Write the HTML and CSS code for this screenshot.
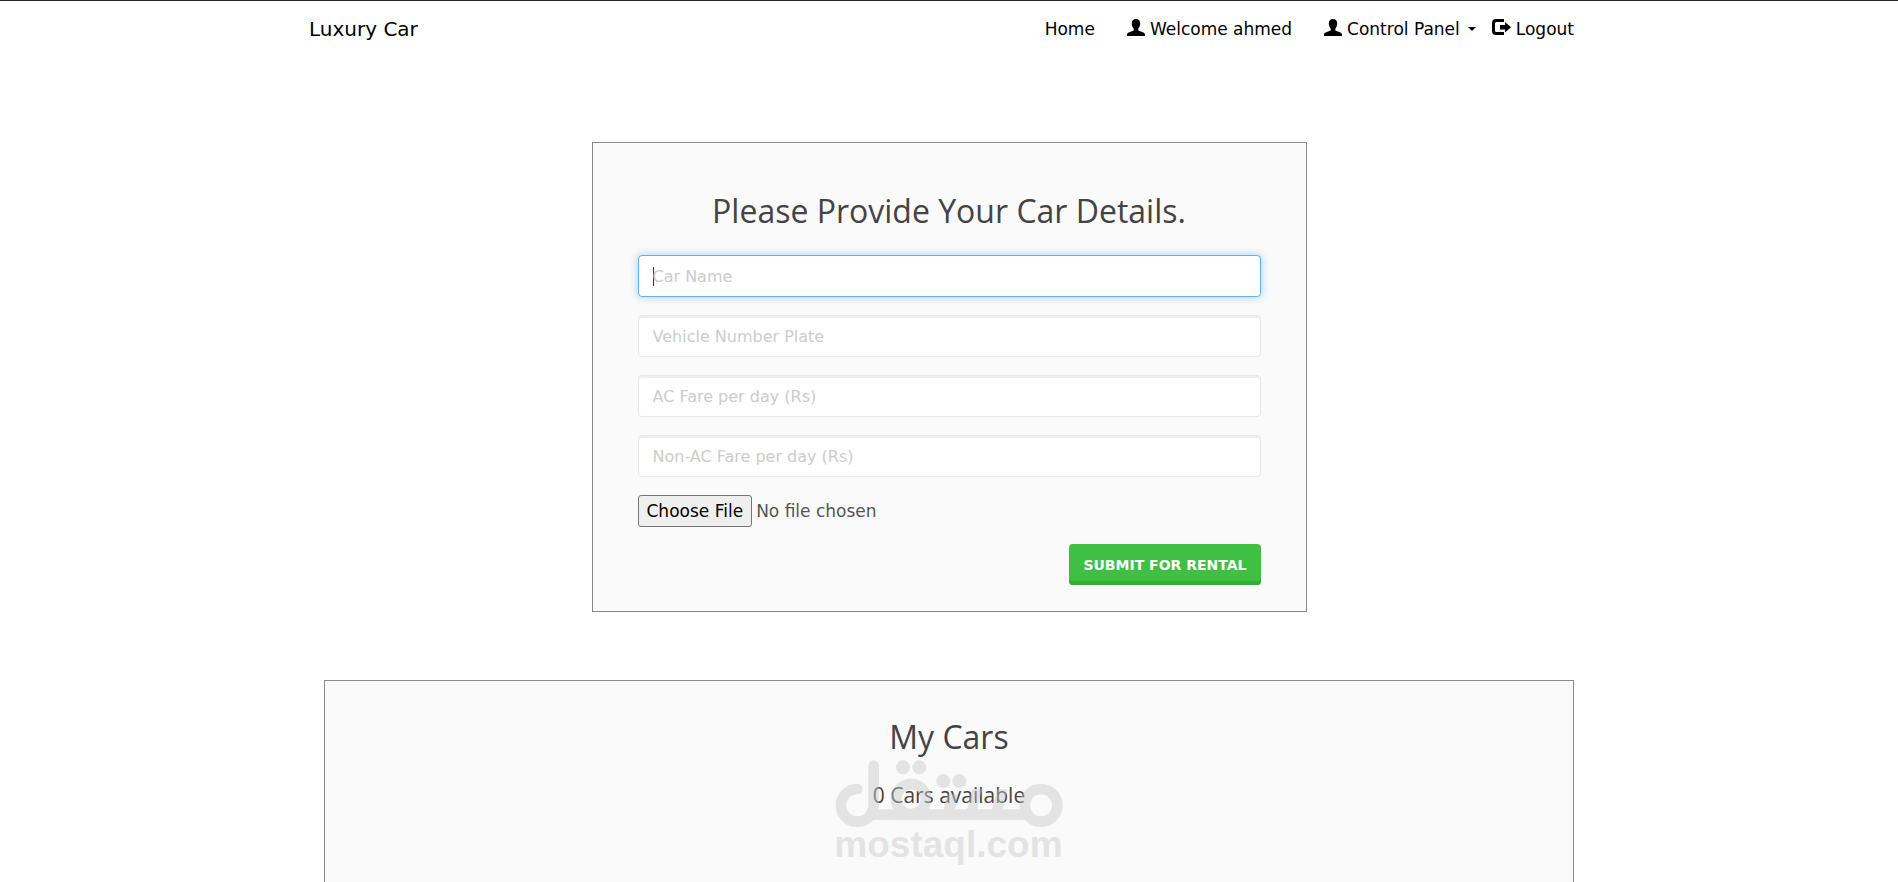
FILE: index.html
```html
<!DOCTYPE html>
<html lang="en">

<head>
    <meta charset="UTF-8">
    <meta name="viewport" content="width=device-width, initial-scale=1.0">
    <title>Luxury Car</title>
    <link rel="stylesheet" href="styles.css">
</head>

<body>
    <nav class="navbar">
        <div class="container navbar-inner">
            <a class="navbar-brand" href="#">Luxury Car</a>
            <ul class="navbar-nav">
                <li><a href="#">Home</a></li>
                <li>
                    <a href="#">
                        <svg class="icon" viewBox="0 0 18 17"><path d="M9 0C6.300 0 4.800 1.800 4.800 4.300C4.800 6.500 5.500 8.500 6.700 9.700V11.400L1.600 13.500C.5 14 0 14.700 0 15.600V17H18V15.600C18 14.700 17.500 14 16.400 13.500L11.300 11.400V9.700C12.500 8.500 13.200 6.500 13.200 4.300C13.200 1.800 11.700 0 9 0Z"/></svg>
                        Welcome ahmed
                    </a>
                </li>
                <li class="dropdown">
                    <a href="#">
                        <svg class="icon" viewBox="0 0 18 17"><path d="M9 0C6.300 0 4.800 1.800 4.800 4.300C4.800 6.500 5.500 8.500 6.700 9.700V11.400L1.600 13.500C.5 14 0 14.700 0 15.600V17H18V15.600C18 14.700 17.500 14 16.400 13.500L11.300 11.400V9.700C12.500 8.500 13.200 6.500 13.200 4.300C13.200 1.800 11.700 0 9 0Z"/></svg>
                        Control Panel
                        <span class="caret"></span>
                    </a>
                </li>
                <li>
                    <a href="#">
                        <svg class="icon icon-logout" viewBox="0 0 19 17"><path d="M12 0H4Q0 0 0 4V12Q0 16 4 16H12V13H4.500Q3 13 3 11.500V4.500Q3 3 4.500 3H12ZM13 3V6H8V10.500H13V13.500L19 8.200Z"/></svg>
                        Logout
                    </a>
                </li>
            </ul>
        </div>
    </nav>

    <form class="form-area">
        <h3>Please Provide Your Car Details.</h3>
        <input type="text" class="form-control focused" name="car_name" placeholder="Car Name" aria-label="Car Name">
        <input type="text" class="form-control" name="car_nameplate" placeholder="Vehicle Number Plate" aria-label="Vehicle Number Plate">
        <input type="text" class="form-control" name="ac_price" placeholder="AC Fare per day (Rs)" aria-label="AC Fare per day (Rs)">
        <input type="text" class="form-control" name="non_ac_price" placeholder="Non-AC Fare per day (Rs)" aria-label="Non-AC Fare per day (Rs)">
        <input type="file" class="file-input" name="car_image" aria-label="Car image">
        <button type="submit" class="btn-submit">Submit for Rental</button>
    </form>

    <div class="container">
        <section class="cars-area">
            <h3>My Cars</h3>
            <h4>0 Cars available</h4>
            <svg class="watermark" viewBox="42 171 690 330" aria-hidden="true">
                <g opacity="0.45">
                    <path class="wm-line" d="M112 264A49 49 0 1 0 161 313V194"/>
                    <circle class="wm-line" cx="663" cy="313" r="49"/>
                    <path class="wm-fill" d="M150 325H630V357H130Z"/>
                    <circle class="wm-fill" cx="249" cy="199" r="21"/>
                    <circle class="wm-fill" cx="298" cy="199" r="21"/>
                    <circle class="wm-fill" cx="370" cy="240" r="21"/>
                    <circle class="wm-fill" cx="418" cy="240" r="21"/>
                    <circle class="wm-line" cx="273" cy="294" r="45"/>
                    <path class="wm-fill" d="M370 330L384 280H414L404 330ZM440 330L456 265H486L470 330ZM515 330L532 265H562L548 330Z"/>
                    <text class="wm-text" x="43" y="467">mostaql.com</text>
                </g>
            </svg>
        </section>
    </div>
</body>

</html>
```
FILE: styles.css
```css
* {
    box-sizing: border-box;
}

body {
    margin: 0;
    border-top: 1px solid #2b2730;
    background-color: #fff;
    color: #444;
    font-family: Verdana, "DejaVu Sans", sans-serif;
    font-size: 17px;
}

a {
    color: #000;
    text-decoration: none;
}

.container {
    max-width: 1280px;
    margin: 0 auto;
    padding: 0 15px;
}

/* navbar */
.navbar-inner {
    display: flex;
    justify-content: space-between;
    align-items: center;
    height: 56px;
    padding-left: 0;
}

.navbar-brand {
    font-size: 20px;
}

.navbar-nav {
    display: flex;
    margin: 0;
    padding: 0;
    list-style: none;
}

.navbar-nav li {
    margin-left: 32px;
}

.navbar-nav .dropdown + li {
    margin-left: 16px;
}

.navbar-nav a {
    display: flex;
    align-items: center;
    height: 24px;
}

.icon {
    width: 18px;
    height: 17px;
    margin-right: 5px;
    margin-bottom: 3px;
    fill: #000;
}

.icon-logout {
    width: 19px;
}

.caret {
    margin-left: 8px;
    border-top: 4px solid #000;
    border-left: 4px solid transparent;
    border-right: 4px solid transparent;
}

h3,
h4 {
    margin: 0;
    font-family: "Segoe UI", "Open Sans", "Noto Sans", sans-serif;
    font-weight: 400;
    text-align: center;
}

h3 {
    font-size: 32px;
    line-height: 40px;
}

h4 {
    font-size: 21px;
    line-height: 28px;
}

/* car form */
.form-area {
    display: flex;
    flex-direction: column;
    align-items: flex-start;
    max-width: 715px;
    margin: 85px auto 68px;
    padding: 48px 45px 26px;
    border: 1px solid #888;
    background-color: #fafafa;
}

.form-area h3 {
    align-self: center;
    margin-bottom: 24px;
}

.form-control {
    width: 100%;
    height: 42px;
    margin-bottom: 18px;
    padding: 6px 14px;
    border: 1px solid #e8e8e8;
    border-radius: 4px;
    background-color: #fff;
    box-shadow: inset 0 2px 0 #eee;
    color: #555;
    font-family: inherit;
    font-size: 16px;
}

.form-control::placeholder {
    color: #ccc;
}

.form-control.focused {
    border-color: #66afe9;
    outline: 0;
    box-shadow: 0 0 8px rgba(102, 175, 233, 0.6);
    /* text cursor */
    background: linear-gradient(#333, #333) 14px center / 1px 19px no-repeat #fff;
    caret-color: transparent;
}

.file-input {
    width: 100%;
    height: 32px;
    margin-bottom: 17px;
    color: #555;
    font-family: inherit;
    font-size: 17px;
}

.file-input::file-selector-button {
    height: 32px;
    padding: 1px 8px;
    border: 1px solid #767676;
    border-radius: 3px;
    background-color: #efefef;
    color: #000;
    font-family: inherit;
    font-size: 17px;
}

.btn-submit {
    align-self: flex-end;
    height: 41px;
    padding: 0 14px;
    border: 0;
    border-radius: 4px;
    background-color: #3fbf43;
    box-shadow: inset 0 -4px 0 #39ab3d;
    color: #fff;
    font-family: inherit;
    font-size: 14px;
    font-weight: 700;
    text-transform: uppercase;
    cursor: pointer;
}

/* my cars */
.cars-area {
    position: relative;
    min-height: 260px;
    padding: 36px 45px;
    border: 1px solid #888;
    background-color: #fafafa;
}

.cars-area h4 {
    margin-top: 24px;
}

.watermark {
    position: absolute;
    top: 77px;
    left: 50%;
    width: 230px;
    height: 110px;
    margin-left: -115px;
}

.wm-line {
    fill: none;
    stroke: #c8c8c8;
    stroke-width: 32;
    stroke-linecap: round;
}

.wm-fill {
    fill: #c8c8c8;
}

.wm-text {
    fill: #c8c8c8;
    font-family: "Liberation Sans", sans-serif;
    font-size: 111px;
    font-weight: 700;
}
```
